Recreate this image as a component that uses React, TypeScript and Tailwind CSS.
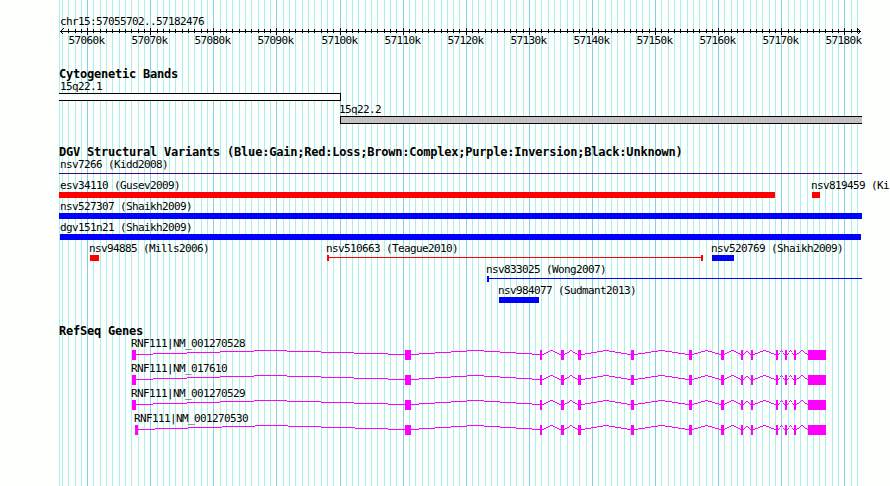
import type { ReactNode } from 'react';

const WIDTH = 890;
const PANEL_LEFT = 59;
const PANEL_RIGHT = 862;
const REGION_START = 57055702;
const REGION_END = 57182476;

const toX = (bp: number) => Math.round(60 + ((bp - REGION_START) * 800) / (REGION_END - REGION_START));

const ticks = Array.from({ length: 127 }, (_, i) => 57056 + i).map((kb) => ({
  kb,
  x: toX(kb * 1000),
  major: kb % 10 === 0,
}));

type Shape = 'bar' | 'line' | 'range';

interface Variant {
  name: string;
  labelX: number;
  start: number;
  end: number;
  color: string;
  shape: Shape;
}

const RED = '#ff0000';
const BLUE = '#0000ff';

const variantLanes: Variant[][] = [
  [{ name: 'nsv7266 (Kidd2008)', labelX: 60, start: 59, end: 862, color: '#4b0082', shape: 'line' }],
  [
    { name: 'esv34110 (Gusev2009)', labelX: 60, start: 59, end: 775, color: RED, shape: 'bar' },
    { name: 'nsv819459 (Ki', labelX: 811, start: 812, end: 820, color: RED, shape: 'bar' },
  ],
  [{ name: 'nsv527307 (Shaikh2009)', labelX: 60, start: 59, end: 862, color: BLUE, shape: 'bar' }],
  [{ name: 'dgv151n21 (Shaikh2009)', labelX: 60, start: 60, end: 861, color: BLUE, shape: 'bar' }],
  [
    { name: 'nsv94885 (Mills2006)', labelX: 89, start: 90, end: 99, color: RED, shape: 'bar' },
    { name: 'nsv510663 (Teague2010)', labelX: 326, start: 327, end: 703, color: RED, shape: 'range' },
    { name: 'nsv520769 (Shaikh2009)', labelX: 711, start: 712, end: 734, color: BLUE, shape: 'bar' },
  ],
  [{ name: 'nsv833025 (Wong2007)', labelX: 486, start: 487, end: 862, color: BLUE, shape: 'range' }],
  [{ name: 'nsv984077 (Sudmant2013)', labelX: 498, start: 499, end: 539, color: BLUE, shape: 'bar' }],
];

// exons shared by all RNF111 transcripts, the first one differs
const sharedExons: [number, number][] = [
  [405, 411],
  [540, 542],
  [561, 564],
  [578, 581],
  [631, 634],
  [689, 692],
  [721, 724],
  [741, 743],
  [751, 753],
  [776, 778],
  [785, 787],
  [794, 796],
  [808, 826],
];

const genes: { name: string; labelX: number; first: [number, number] }[] = [
  { name: 'RNF111|NM_001270528', labelX: 131, first: [132, 136] },
  { name: 'RNF111|NM_017610', labelX: 131, first: [132, 136] },
  { name: 'RNF111|NM_001270529', labelX: 131, first: [132, 136] },
  { name: 'RNF111|NM_001270530', labelX: 134, first: [135, 138] },
];

// intron drawn as whole-pixel steps, rising 4px to the middle
const intronPath = (from: number, to: number) => {
  const half = (to - from - 1) / 2;
  let d = '';
  for (let x = from; x < to; x++) {
    const rise = Math.round(4 * (1 - Math.abs(x - from - half) / half));
    d += `M${x} ${16 - rise}h1v1h-1z`;
  }
  return d;
};

function Label({ x, y, children }: { x: number; y: number; children: ReactNode }) {
  return (
    <text x={x} y={y} className="fill-black text-[11px] tracking-[-0.62px]">
      {children}
    </text>
  );
}

function Lane({ height, children }: { height: number; children: ReactNode }) {
  return (
    <svg width={WIDTH} height={height} shapeRendering="crispEdges" className="block shrink-0">
      {children}
    </svg>
  );
}

function Track({ title, children }: { title: string; children: ReactNode }) {
  return (
    <section className="flex flex-col">
      <h2 className="h-[15px] pl-[59px] text-[12px] leading-[17px] font-bold tracking-[-0.22px] whitespace-pre">
        {title}
      </h2>
      {children}
    </section>
  );
}

function GridLines() {
  return (
    <svg width={WIDTH} height={486} shapeRendering="crispEdges" className="absolute inset-0">
      <rect x={PANEL_LEFT} y={0} width={1} height={486} fill="#afeeee" />
      {ticks.map((t) => (
        <rect key={t.kb} x={t.x} y={0} width={1} height={486} fill={t.major ? '#87ceeb' : '#afeeee'} />
      ))}
    </svg>
  );
}

function Ruler() {
  return (
    <Lane height={50}>
      <Label x={60} y={25}>chr15:57055702..57182476</Label>
      <rect x={60} y={31} width={801} height={1} />
      <path d="M63.5 28.5 L60.5 31.5 L63.5 34.5 M857.5 28.5 L860.5 31.5 L857.5 34.5" fill="none" stroke="black" />
      {ticks
        .filter((t) => t.x > 64 && t.x < 860)
        .map((t) => (
          <rect key={t.kb} x={t.x} y={t.major ? 28 : 29} width={1} height={t.major ? 7 : 4} />
        ))}
      {ticks
        .filter((t) => t.major)
        .map((t) => (
          <Label key={t.kb} x={t.x - 18.5} y={44}>{`${t.kb}k`}</Label>
        ))}
    </Lane>
  );
}

function VariantGlyph({ start, end, color, shape }: Variant) {
  if (shape === 'bar') {
    return <rect x={start} y={12} width={end - start} height={6} fill={color} />;
  }
  return (
    <g fill={color}>
      <rect x={start} y={14} width={end - start} height={1} />
      {shape === 'range' && <rect x={start} y={12} width={2} height={6} />}
      {shape === 'range' && end < PANEL_RIGHT && <rect x={end - 2} y={12} width={2} height={6} />}
    </g>
  );
}

function Gene({ exons }: { exons: [number, number][] }) {
  return (
    <g fill="#ff00ff">
      {exons.slice(1).map(([next], i) => (
        <path key={next} d={intronPath(exons[i][1], next)} />
      ))}
      {exons.map(([start, end]) => (
        <rect key={start} x={start} y={12} width={end - start} height={10} />
      ))}
    </g>
  );
}

export default function App() {
  return (
    <div className="relative h-[486px] w-[890px] overflow-hidden bg-[#fdfffc] font-['DejaVu_Sans_Mono',monospace] text-black">
      <GridLines />
      <main className="relative flex flex-col">
        <Ruler />
        <div className="mt-4 flex flex-col gap-[17px]">
          <Track title="Cytogenetic Bands">
            <Lane height={23}>
              <Label x={60} y={9}>15q22.1</Label>
              <rect x={PANEL_LEFT} y={12} width={282} height={8} />
              <rect x={PANEL_LEFT} y={13} width={281} height={6} fill="#fdfffc" />
            </Lane>
            <Lane height={23}>
              <Label x={339} y={9}>15q22.2</Label>
              <rect x={340} y={12} width={522} height={8} />
              <rect x={341} y={13} width={521} height={6} fill="#c4c1c3" />
            </Lane>
          </Track>
          <Track title="DGV Structural Variants (Blue:Gain;Red:Loss;Brown:Complex;Purple:Inversion;Black:Unknown)">
            {variantLanes.map((lane) => (
              <Lane key={lane[0].name} height={21}>
                {lane.map((v) => (
                  <g key={v.name}>
                    <Label x={v.labelX} y={9}>{v.name}</Label>
                    <VariantGlyph {...v} />
                  </g>
                ))}
              </Lane>
            ))}
          </Track>
          <Track title="RefSeq Genes">
            {genes.map((gene) => (
              <Lane key={gene.name} height={25}>
                <Label x={gene.labelX} y={9}>{gene.name}</Label>
                <Gene exons={[gene.first, ...sharedExons]} />
              </Lane>
            ))}
          </Track>
        </div>
      </main>
    </div>
  );
}
